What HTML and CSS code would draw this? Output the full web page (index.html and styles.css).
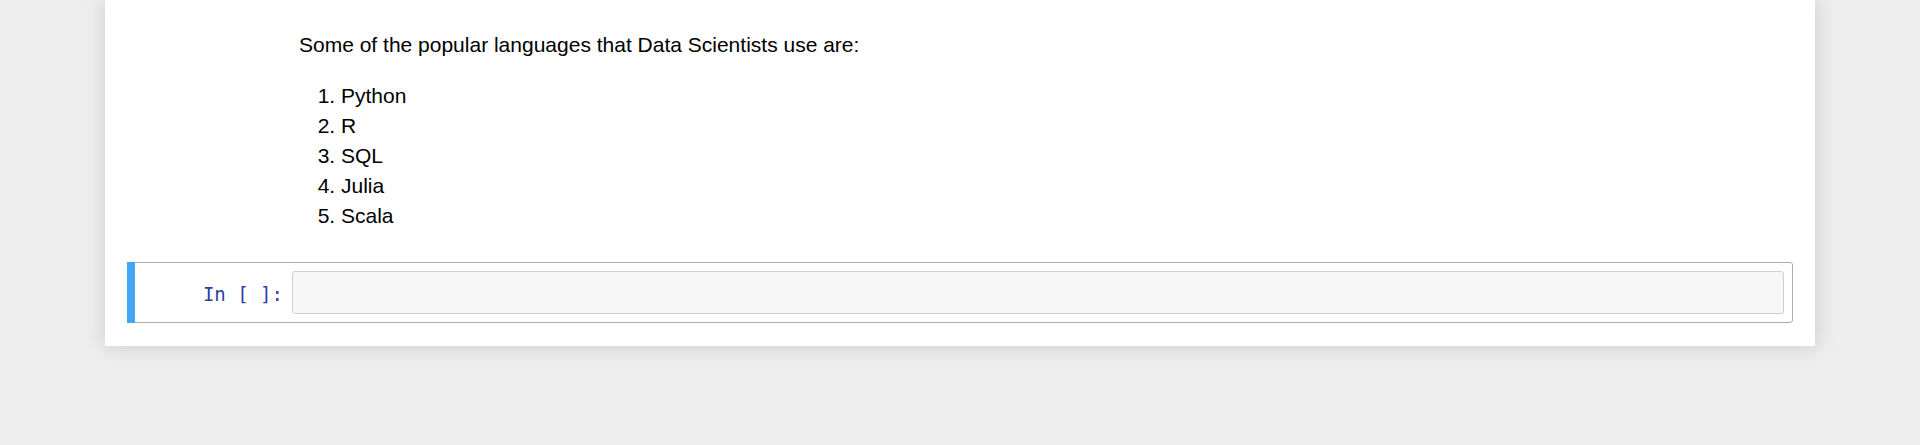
FILE: index.html
```html
<!DOCTYPE html>
<html>
<head>
<meta charset="utf-8">
<title>Notebook</title>
<link rel="stylesheet" href="styles.css">
</head>
<body>
<div class="notebook-container">
  <div class="cell text-cell">
    <div class="prompt"></div>
    <div class="text-render">
      <p class="para">Some of the popular languages that Data Scientists use are:</p>
      <ol class="lang-list">
        <li>Python</li>
        <li>R</li>
        <li>SQL</li>
        <li>Julia</li>
        <li>Scala</li>
      </ol>
    </div>
  </div>
  <div class="cell code-cell selected">
    <div class="prompt input-prompt">In&nbsp;[&nbsp;]:</div>
    <div class="input-area"></div>
  </div>
</div>
</body>
</html>
```
FILE: styles.css
```css
html, body {
  margin: 0;
  padding: 0;
}
body {
  background: #eeeeee;
  font-family: "Liberation Sans", Arial, sans-serif;
  font-size: 21px;
  line-height: 30px;
  color: #000;
  height: 445px;
  overflow: hidden;
}
.notebook-container {
  width: 1710px;
  margin: 0 auto;
  box-sizing: border-box;
  padding: 11px 22.5px 22.5px 22px;
  background: #fff;
  box-shadow: 0 0 18px 1.5px rgba(87, 87, 87, 0.2);
}
.cell {
  display: flex;
  position: relative;
  box-sizing: border-box;
  border: 1px solid transparent;
  border-radius: 3px;
  padding: 8px;
}
.prompt {
  flex: 0 0 156px;
  box-sizing: border-box;
}
.text-render {
  flex: 1;
  padding: 10px 10px 10px 7px;
}
.para {
  margin: 0;
}
.lang-list {
  margin: 21px 0 12px;
  padding-left: 42px;
}
.code-cell.selected {
  border-color: #ababab;
}
.code-cell.selected::before {
  content: "";
  position: absolute;
  left: -1px;
  top: -1px;
  bottom: -1px;
  width: 8px;
  background: #42a5f5;
}
.input-prompt {
  font-family: "DejaVu Sans Mono", monospace;
  font-size: 19px;
  line-height: 24px;
  color: #303f9f;
  text-align: right;
  padding: 11px 9px 0 0;
  white-space: nowrap;
}
.input-area {
  flex: 1;
  height: 43px;
  box-sizing: border-box;
  border: 1px solid #cfcfcf;
  border-radius: 3px;
  background: #f7f7f7;
}
```
